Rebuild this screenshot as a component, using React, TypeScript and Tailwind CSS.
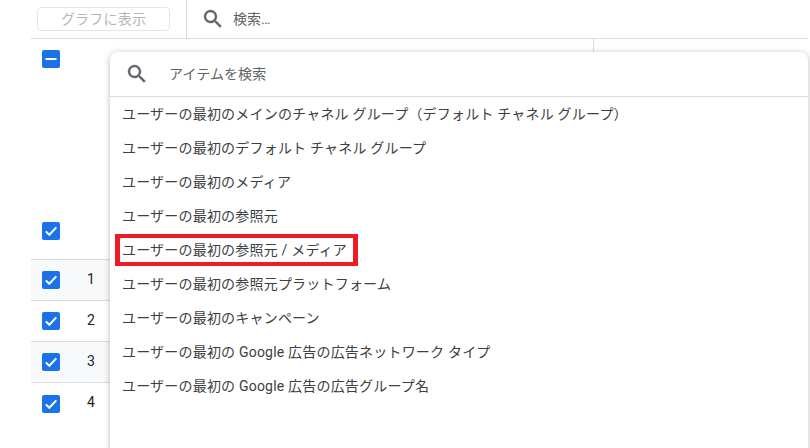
const items = [
  'ユーザーの最初のメインのチャネル グループ\uFF08デフォルト チャネル グループ\uFF09',
  'ユーザーの最初のデフォルト チャネル グループ',
  'ユーザーの最初のメディア',
  'ユーザーの最初の参照元',
  'ユーザーの最初の参照元 / メディア',
  'ユーザーの最初の参照元プラットフォーム',
  'ユーザーの最初のキャンペーン',
  'ユーザーの最初の Google 広告の広告ネットワーク タイプ',
  'ユーザーの最初の Google 広告の広告グループ名',
]

function SearchIcon({ className }: { className: string }) {
  return (
    <svg viewBox="0 0 24 24" className={className} fill="currentColor" stroke="currentColor" strokeWidth="0.4">
      <path d="M15.5 14h-.79l-.28-.27A6.47 6.47 0 0 0 16 9.5 6.5 6.5 0 1 0 9.5 16c1.61 0 3.09-.59 4.23-1.57l.27.28v.79l5 4.99L20.49 19l-4.99-5zm-6 0C7.01 14 5 11.99 5 9.5S7.01 5 9.5 5 14 7.01 14 9.5 11.99 14 9.5 14z" />
    </svg>
  )
}

function Check({ minus }: { minus?: boolean }) {
  return (
    <div className="flex h-[18px] w-[18px] items-center justify-center rounded-[2px] bg-[#1a73e8]">
      <svg viewBox="0 0 18 18" className="h-[18px] w-[18px]" fill="none" stroke="white" strokeWidth="2">
        {minus ? <path d="M3.5 9h11" /> : <path d="M3.8 9.4l3.5 3.4 7-7.4" />}
      </svg>
    </div>
  )
}

function Row({ n, shaded }: { n: number; shaded?: boolean }) {
  return (
    <div className={`flex h-[41px] items-center border-b border-[#dadce0] pl-[11px] ${shaded ? 'bg-[#f8f9fa]' : 'bg-white'}`}>
      <Check />
      <span className="ml-[27px] pb-[2px] text-[14px] text-[#202124]">{n}</span>
    </div>
  )
}

export default function App() {
  return (
    <div
      className="relative h-[448px] w-[810px] overflow-hidden bg-white pl-[31px] pr-[2px]"
      style={{ fontFamily: '"Roboto", "Noto Sans CJK JP", sans-serif' }}
    >
      {/* toolbar */}
      <div className="flex h-[39px] items-stretch border-b border-[#dadce0]">
        <div className="flex w-[156px] items-center border-r border-[#dadce0] pl-[6px]">
          <div className="flex h-[24px] w-[133px] items-center justify-center rounded-[4px] border border-[#e3e5e8] text-[14px] tracking-[0.2px] text-[#b4b6b9]">
            グラフに表示
          </div>
        </div>
        <div className="flex items-center pl-[14px] text-[14px] text-[#5f6368]">
          <SearchIcon className="h-[24px] w-[24px] text-[#5f6368]" />
          <span className="ml-[8px]">検索…</span>
        </div>
      </div>

      {/* table behind the menu */}
      <div className="flex h-[221px] flex-col justify-between border-b border-[#dadce0] pb-[19px] pl-[11px] pt-[11px]">
        <Check minus />
        <Check />
      </div>
      <Row n={1} shaded />
      <Row n={2} />
      <Row n={3} shaded />
      <div className="flex h-[41px] items-center pl-[11px]">
        <Check />
        <span className="ml-[27px] pb-[2px] text-[14px] text-[#202124]">4</span>
      </div>
      <div className="absolute left-[593px] top-[39px] h-[14px] w-px bg-[#dadce0]" />

      {/* menu */}
      <div className="absolute left-[110px] top-[52px] h-[410px] w-[698px] rounded-[8px] bg-white shadow-[0_1px_6px_rgba(60,64,67,0.35)]">
        <div className="flex h-[45px] items-center border-b border-[#dadce0] pl-[15px] text-[14px] tracking-[0.1px] text-[#5f6368]">
          <SearchIcon className="h-[24px] w-[24px] text-[#5f6368]" />
          <span className="ml-[20px]">アイテムを検索</span>
        </div>
        <div className="pl-[12px]">
          {items.map((t, i) => (
            <div key={t} className="relative flex h-[34px] items-center whitespace-nowrap text-[14px] tracking-[0.2px] text-[#3c4043]">
              {t}
              {i === 4 && (
                <div className="absolute left-[-7px] top-[1px] h-[32px] w-[243px] border-x-[5px] border-y-[4px] border-[#ed1c24]" />
              )}
            </div>
          ))}
        </div>
      </div>
    </div>
  )
}
